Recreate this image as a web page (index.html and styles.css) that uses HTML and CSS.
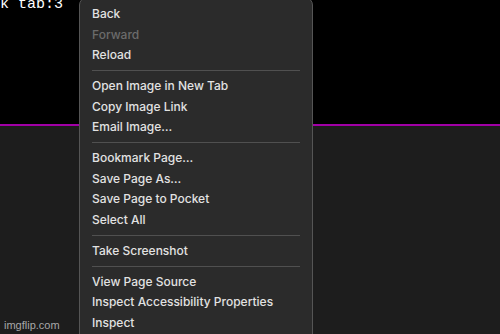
FILE: index.html
```html
<!DOCTYPE html>
<html>
<head>
<meta charset="utf-8">
<link rel="stylesheet" href="styles.css">
</head>
<body>
<div class="page">
  <div class="top"><pre class="code">ck tab:3</pre></div>
  <div class="rule"></div>
  <div class="bottom"><span class="watermark">imgflip.com</span></div>
</div>
<div class="menu">
  <div class="item">Back</div>
  <div class="item disabled">Forward</div>
  <div class="item">Reload</div>
  <div class="sep"></div>
  <div class="item">Open Image in New Tab</div>
  <div class="item">Copy Image Link</div>
  <div class="item">Email Image…</div>
  <div class="sep"></div>
  <div class="item">Bookmark Page…</div>
  <div class="item">Save Page As…</div>
  <div class="item">Save Page to Pocket</div>
  <div class="item">Select All</div>
  <div class="sep"></div>
  <div class="item">Take Screenshot</div>
  <div class="sep"></div>
  <div class="item">View Page Source</div>
  <div class="item">Inspect Accessibility Properties</div>
  <div class="item">Inspect</div>
</div>
</body>
</html>
```
FILE: styles.css
```css
html, body {
  margin: 0;
  padding: 0;
  width: 500px;
  height: 334px;
  overflow: hidden;
  background: #1d1d1d;
}
.page {
  display: flex;
  flex-direction: column;
  height: 334px;
}
.top {
  height: 124px;
  background: #000;
  position: relative;
}
.code {
  margin: 0;
  font-family: "Liberation Mono", "DejaVu Sans Mono", monospace;
  font-size: 15px;
  line-height: 15px;
  color: #fff;
  transform: translate(-9px, -3px);
}
.rule {
  height: 2px;
  background: #a100a6;
}
.bottom {
  flex: 1;
  background: #1d1d1d;
  display: flex;
  align-items: flex-end;
  padding: 0 0 3px 4px;
}
.watermark {
  font-family: "Liberation Sans", Arial, sans-serif;
  font-size: 11px;
  color: #a8a8a8;
}
.menu {
  position: absolute;
  left: 79px;
  top: -3px;
  width: 234px;
  height: 345px;
  box-sizing: border-box;
  background: #2b2b2b;
  border: 1px solid #555;
  border-radius: 8px;
  padding: 6px 12px 0 12px;
  font-family: Inter, "Noto Sans", sans-serif;
  font-size: 12px;
  font-weight: 500;
  color: #e2e2e2;
}
.item {
  height: 20.5px;
  line-height: 20.5px;
  white-space: nowrap;
}
.item.disabled {
  color: #6b6b6b;
}
.sep {
  height: 1px;
  background: #505050;
  margin: 4.75px 0 4.75px 0;
}
```
